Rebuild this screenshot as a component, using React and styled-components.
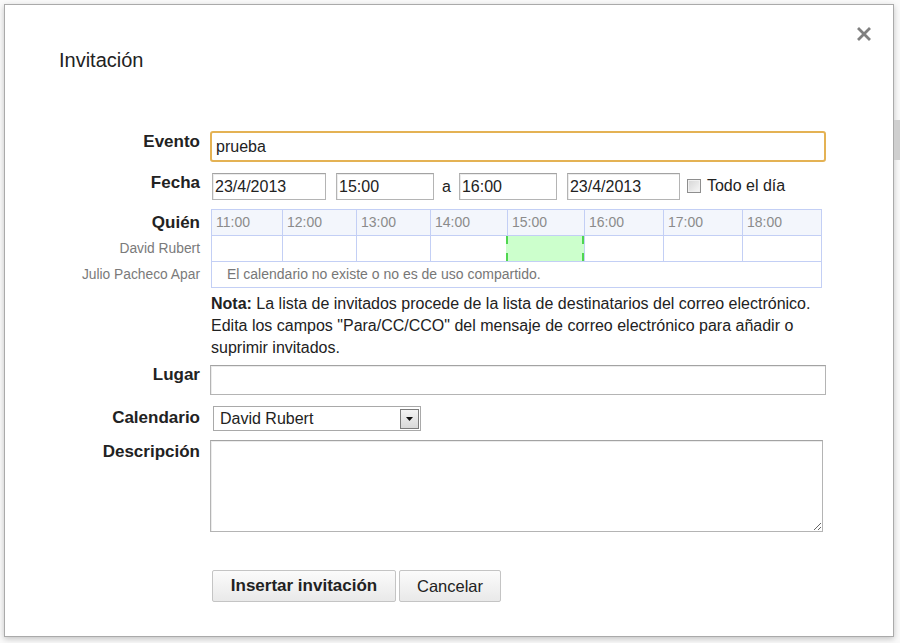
import React from 'react'
import styled, { createGlobalStyle } from 'styled-components'

const GlobalStyle = createGlobalStyle`
  html, body {
    margin: 0;
    padding: 0;
    background: #fafafa;
    font-family: "Liberation Sans", Arial, sans-serif;
    color: #222;
  }
`;

const Page = styled.div`
  display: flex;
  height: 643px;
  box-sizing: border-box;
  padding: 4px 0 0 4px;
  overflow: hidden;
`;

const Dialog = styled.div`
  width: 890px;
  height: 633px;
  flex-shrink: 0;
  box-sizing: border-box;
  border: 1px solid #aaa;
  background: #fff;
  box-shadow: 0 2px 6px rgba(0, 0, 0, 0.22);
  display: flex;
  flex-direction: column;
`;

const SideStrip = styled.div`
  width: 6px;
  padding-top: 116px;
  .thumb {
    height: 40px;
    background: #cfcfcf;
  }
`;

const Header = styled.div`
  display: flex;
  justify-content: space-between;
  align-items: flex-start;
  padding: 22px 22px 0 54px;
`;

const Title = styled.h1`
  margin: 21px 0 0;
  font-size: 20px;
  line-height: 24px;
  font-weight: normal;
  color: #222;
`;

const Close = styled.div`
  width: 14px;
  height: 14px;
  cursor: pointer;
  svg { display: block; }
`;

const Form = styled.div`
  margin-top: 59px;
  display: flex;
  flex-direction: column;
`;

const Row = styled.div`
  display: flex;
  align-items: flex-start;
  margin-top: ${p => p.$top || 0}px;
`;

const Label = styled.div`
  width: 195px;
  flex-shrink: 0;
  text-align: right;
  font-weight: bold;
  font-size: 17px;
  line-height: 19px;
  padding-top: ${p => p.$pad || 0}px;
  color: #222;
`;

const Field = styled.div`
  margin-left: 10px;
  padding-left: ${p => p.$indent || 0}px;
  display: flex;
  align-items: center;
  gap: ${p => p.$gap || 0}px;
`;

const TextInput = styled.input`
  box-sizing: border-box;
  width: ${p => p.$w}px;
  height: ${p => p.$h || 27}px;
  margin: 0;
  padding: 0 ${p => p.$pl || 2}px;
  font-family: "Liberation Sans", Arial, sans-serif;
  font-size: 16px;
  color: #222;
  background: #fff;
  border: 1px solid #b4b4b4;
  border-top-color: #a3a3a3;
  box-shadow: inset 1px 1px 0 #ececec;
  outline: none;
  border-radius: 0;
`;

const FocusInput = styled(TextInput)`
  border: 2px solid #e4b254;
  border-radius: 3px;
  box-shadow: none;
`;

const Conj = styled.span`
  font-size: 16px;
  margin: 0 -2px;
`;

const CheckLabel = styled.label`
  display: flex;
  align-items: center;
  gap: 6px;
  font-size: 16px;
  margin: -2px 0 0 -3px;
`;

const CheckBox = styled.span`
  width: 14px;
  height: 14px;
  box-sizing: border-box;
  border: 1px solid #8e8e8e;
  background: linear-gradient(135deg, #d5d5d5, #f7f7f7);
  box-shadow: inset 0 0 0 1px #f0f0f0;
`;

const SideLabels = styled.div`
  width: 195px;
  flex-shrink: 0;
  display: flex;
  flex-direction: column;
  padding-top: 1px;
`;

const SideLabel = styled.div`
  height: 26px;
  line-height: 26px;
  text-align: right;
  white-space: nowrap;
  font-size: ${p => (p.$main ? '17px' : '13.8px')};
  font-weight: ${p => (p.$main ? 'bold' : 'normal')};
  color: ${p => (p.$main ? '#222' : '#7a7a7a')};
`;

const Schedule = styled.div`
  margin-left: 11px;
  display: grid;
  grid-template-columns: 71px 74px 74px 77px 77px 79px 79px 79px;
  border: 1px solid #c3cff5;
  border-right: none;
  border-bottom: none;
`;

const HourCell = styled.div`
  height: 26px;
  box-sizing: border-box;
  border-right: 1px solid #c3cff5;
  border-bottom: 1px solid #c3cff5;
  background: #f3f6fc;
  color: #8b8b8b;
  font-size: 14px;
  line-height: 25px;
  padding-left: 4px;
`;

const SlotCell = styled.div`
  height: 26px;
  box-sizing: border-box;
  border-right: 1px solid #c3cff5;
  border-bottom: 1px solid #c3cff5;
  background: ${p =>
    p.$busy
      ? `linear-gradient(#4fd64f 0 8px, transparent 8px 17px, #4fd64f 17px) left / 2px 100% no-repeat,
         linear-gradient(#4fd64f 0 8px, transparent 8px 17px, #4fd64f 17px) right / 2px 100% no-repeat,
         #ccffcc`
      : '#fff'};
  ${p => p.$busy && 'margin-left: -2px;'}
`;

const NoticeCell = styled.div`
  grid-column: 1 / -1;
  height: 26px;
  box-sizing: border-box;
  border-right: 1px solid #c3cff5;
  border-bottom: 1px solid #c3cff5;
  color: #777;
  font-size: 14px;
  line-height: 25px;
  padding-left: 15px;
`;

const Note = styled.p`
  margin: 5px 0 0 206px;
  font-size: 16px;
  line-height: 22px;
  white-space: nowrap;
  color: #222;
  b { font-weight: bold; }
`;

const Select = styled.div`
  box-sizing: border-box;
  width: 208px;
  height: 25px;
  margin-left: 3px;
  border: 1px solid #a9a9a9;
  display: flex;
  align-items: center;
  justify-content: space-between;
  padding: 0 1px 0 6px;
  font-size: 16px;
  background: #fff;
`;

const SelectArrow = styled.div`
  width: 19px;
  height: 20px;
  box-sizing: border-box;
  border: 1px solid #7b7b7b;
  background: linear-gradient(#f4f4f4, #d9d9d9);
  display: flex;
  align-items: center;
  justify-content: center;
  svg { display: block; }
`;

const TextArea = styled.textarea`
  box-sizing: border-box;
  width: 613px;
  height: 92px;
  margin: 0;
  border: 1px solid #b4b4b4;
  border-top-color: #a3a3a3;
  box-shadow: inset 1px 1px 0 #ececec;
  outline: none;
  resize: both;
  font-family: "Liberation Sans", Arial, sans-serif;
  font-size: 14px;
`;

const Buttons = styled.div`
  display: flex;
  gap: 3px;
  margin: 38px 0 0 207px;
`;

const Button = styled.button`
  box-sizing: border-box;
  width: ${p => p.$w}px;
  height: 32px;
  margin: 0;
  padding: 0;
  border: 1px solid #c4c4c4;
  border-radius: 2px;
  background: linear-gradient(#fbfbfb, #e9e9e9);
  font-family: "Liberation Sans", Arial, sans-serif;
  font-size: ${p => (p.$primary ? '17px' : '16.5px')};
  font-weight: ${p => (p.$primary ? 'bold' : 'normal')};
  color: #222;
  cursor: pointer;
`;

const hours = ['11:00', '12:00', '13:00', '14:00', '15:00', '16:00', '17:00', '18:00'];

const App = () => (
  <>
    <GlobalStyle />
    <Page>
      <Dialog>
        <Header>
          <Title>Invitación</Title>
          <Close>
            <svg width="14" height="14" viewBox="0 0 14 14">
              <path d="M2 2 L12 12 M12 2 L2 12" stroke="#808080" strokeWidth="2.8" strokeLinecap="square" />
            </svg>
          </Close>
        </Header>

        <Form>
          <Row>
            <Label $pad={1}>Evento</Label>
            <Field>
              <FocusInput $w={616} $h={31} $pl={4} defaultValue="prueba" />
            </Field>
          </Row>

          <Row $top={11}>
            <Label>Fecha</Label>
            <Field $indent={2} $gap={10}>
              <TextInput $w={114} defaultValue="23/4/2013" />
              <TextInput $w={98} defaultValue="15:00" />
              <Conj>a</Conj>
              <TextInput $w={98} defaultValue="16:00" />
              <TextInput $w={113} defaultValue="23/4/2013" />
              <CheckLabel>
                <CheckBox />
                Todo el día
              </CheckLabel>
            </Field>
          </Row>

          <Row $top={9}>
            <SideLabels>
              <SideLabel $main>Quién</SideLabel>
              <SideLabel>David Rubert</SideLabel>
              <SideLabel>Julio Pacheco Apar</SideLabel>
            </SideLabels>
            <Schedule>
              {hours.map(h => (
                <HourCell key={h}>{h}</HourCell>
              ))}
              {hours.map(h => (
                <SlotCell key={h} $busy={h === '15:00'} />
              ))}
              <NoticeCell>El calendario no existe o no es de uso compartido.</NoticeCell>
            </Schedule>
          </Row>

          <Note>
            <b>Nota:</b> La lista de invitados procede de la lista de destinatarios del correo electrónico.
            <br />
            Edita los campos "Para/CC/CCO" del mensaje de correo electrónico para añadir o
            <br />
            suprimir invitados.
          </Note>

          <Row $top={6}>
            <Label $pad={0}>Lugar</Label>
            <Field>
              <TextInput $w={616} $h={30} />
            </Field>
          </Row>

          <Row $top={11}>
            <Label $pad={2}>Calendario</Label>
            <Field>
              <Select>
                David Rubert
                <SelectArrow>
                  <svg width="7" height="4" viewBox="0 0 7 4">
                    <path d="M0 0 H7 L3.5 4 Z" fill="#111" />
                  </svg>
                </SelectArrow>
              </Select>
            </Field>
          </Row>

          <Row $top={9}>
            <Label $pad={2}>Descripción</Label>
            <Field>
              <TextArea />
            </Field>
          </Row>

          <Buttons>
            <Button $w={184} $primary>Insertar invitación</Button>
            <Button $w={102}>Cancelar</Button>
          </Buttons>
        </Form>
      </Dialog>
      <SideStrip>
        <div className="thumb" />
      </SideStrip>
    </Page>
  </>
);

export default App;
